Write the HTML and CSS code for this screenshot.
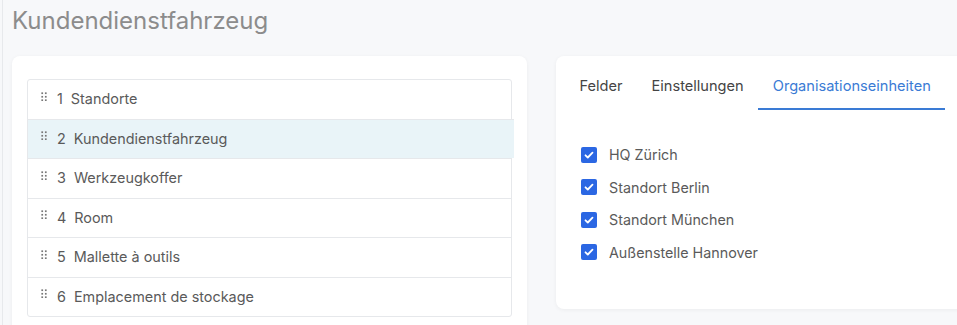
FILE: index.html
```html
<!DOCTYPE html>
<html lang="de">
<head>
    <meta charset="UTF-8">
    <meta name="viewport" content="width=device-width, initial-scale=1.0">
    <title>Kundendienstfahrzeug</title>
    <link rel="stylesheet" href="styles.css">
</head>
<body>
<div class="page">
    <h1 class="page-title">Kundendienstfahrzeug</h1>

    <div class="columns">
        <!-- Sortable type list -->
        <div class="card list-card">
            <ul class="type-list">
                <li class="type-row"><span class="handle"></span><span class="num">1</span>Standorte</li>
                <li class="type-row active"><span class="handle"></span><span class="num">2</span>Kundendienstfahrzeug</li>
                <li class="type-row"><span class="handle"></span><span class="num">3</span>Werkzeugkoffer</li>
                <li class="type-row"><span class="handle"></span><span class="num">4</span>Room</li>
                <li class="type-row"><span class="handle"></span><span class="num">5</span>Mallette à outils</li>
                <li class="type-row"><span class="handle"></span><span class="num">6</span>Emplacement de stockage</li>
            </ul>
        </div>

        <!-- Details with tabs -->
        <div class="card detail-card">
            <div class="tabs">
                <div class="tab">Felder</div>
                <div class="tab">Einstellungen</div>
                <div class="tab tab-active">Organisationseinheiten</div>
            </div>

            <div class="units">
                <label class="unit"><span class="check"></span>HQ Zürich</label>
                <label class="unit"><span class="check"></span>Standort Berlin</label>
                <label class="unit"><span class="check"></span>Standort München</label>
                <label class="unit"><span class="check"></span>Außenstelle Hannover</label>
            </div>
        </div>
    </div>
</div>
</body>
</html>
```

FILE: styles.css
```css
html, body {
    margin: 0;
    height: 100%;
}
body {
    font-family: Inter, "Noto Sans", Arial, sans-serif;
    background: #f7f8fa;
    overflow: hidden;
    color: #555;
}
.page {
    margin-left: 2px;
    border-left: 1px solid #e7e9ec;
    padding: 6px 0 0 9px;
    height: 100%;
    box-sizing: border-box;
}
.page-title {
    margin: 0;
    font-size: 24px;
    line-height: 30px;
    font-weight: 400;
    color: #8c8c8c;
}
.columns {
    display: grid;
    grid-template-columns: 515px 440px;
    gap: 29px;
    margin-top: 20px;
    align-items: start;
}
.card {
    background: #fff;
    border-radius: 8px;
    box-shadow: 0 1px 4px rgba(0, 0, 0, 0.05);
}
.list-card {
    padding: 23px 15px 40px;
}
.type-list {
    list-style: none;
    margin: 0;
    padding: 0;
    border: 1px solid #e6e8eb;
    border-radius: 3px;
}
.type-row {
    display: flex;
    align-items: center;
    padding: 10px 0 10px 13px;
    line-height: 18.5px;
    font-size: 14.4px;
    color: #5a5a5a;
    border-top: 1px solid #e6e8eb;
}
.type-row:first-child {
    border-top: none;
}
.type-row.active {
    background: #e9f4f8;
    margin-right: -3px;
}
.handle {
    width: 6px;
    height: 9px;
    margin-right: 10px;
    margin-top: -6px;
    background-image: radial-gradient(circle, #777 0.9px, transparent 1.1px);
    background-size: 3.5px 3.5px;
    background-position: -0.5px -0.5px;
}
.num {
    margin-right: 8px;
}
.detail-card {
    padding: 8px 8px 47px 9px;
}
.tabs {
    display: flex;
}
.tab {
    padding: 12px 14.5px 12px;
    font-size: 14.6px;
    line-height: 20px;
    color: #444;
    border-bottom: 2px solid transparent;
}
.tab-active {
    color: #3a7bd5;
    border-bottom-color: #3a7bd5;
}
.units {
    display: flex;
    flex-direction: column;
    gap: 13px;
    padding: 35px 0 0 16px;
}
.unit {
    display: flex;
    align-items: center;
    font-size: 14.3px;
    line-height: 19.5px;
    color: #5a5a5a;
}
.check {
    width: 16px;
    height: 16px;
    margin-right: 12px;
    border-radius: 2px;
    background: #2b67e3 url("data:image/svg+xml;utf8,<svg xmlns='http://www.w3.org/2000/svg' viewBox='0 0 16 16'><path d='M4.5 8.3l2.3 2.2 4.7-4.8' fill='none' stroke='white' stroke-width='1.8' stroke-linecap='round' stroke-linejoin='round'/></svg>") no-repeat center;
}
```
